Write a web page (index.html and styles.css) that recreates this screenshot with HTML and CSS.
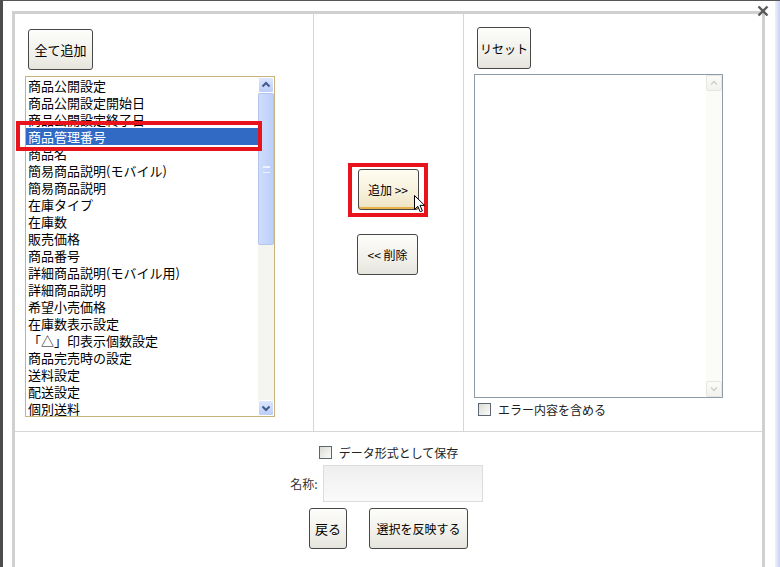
FILE: index.html
```html
<!DOCTYPE html>
<html lang="ja">
<head>
<meta charset="UTF-8">
<meta name="viewport" content="width=device-width, initial-scale=1.0">
<title>項目選択</title>
<link rel="stylesheet" href="styles.css">
</head>
<body>

<div class="window">
    <div class="panel">
        <div class="columns">
            <div class="col col-left">
                <button type="button" class="btn btn-addall">全て追加</button>
                <div class="listbox">
                    <ul class="items">
                        <li>商品公開設定</li>
                        <li>商品公開設定開始日</li>
                        <li>商品公開設定終了日</li>
                        <li class="selected">商品管理番号</li>
                        <li>商品名</li>
                        <li>簡易商品説明(モバイル)</li>
                        <li>簡易商品説明</li>
                        <li>在庫タイプ</li>
                        <li>在庫数</li>
                        <li>販売価格</li>
                        <li>商品番号</li>
                        <li>詳細商品説明(モバイル用)</li>
                        <li>詳細商品説明</li>
                        <li>希望小売価格</li>
                        <li>在庫数表示設定</li>
                        <li>「△」印表示個数設定</li>
                        <li>商品完売時の設定</li>
                        <li>送料設定</li>
                        <li>配送設定</li>
                        <li>個別送料</li>
                    </ul>
                    <div class="scrollbar">
                        <div class="sb-btn">
                            <svg width="14" height="14" viewBox="0 0 14 14"><path d="M3.5 8.5 L7 5 L10.5 8.5" fill="none" stroke="#3f5a8c" stroke-width="2"/></svg>
                        </div>
                        <div class="sb-track">
                            <div class="sb-thumb"><span class="grip"></span></div>
                        </div>
                        <div class="sb-btn">
                            <svg width="14" height="14" viewBox="0 0 14 14"><path d="M3.5 5.5 L7 9 L10.5 5.5" fill="none" stroke="#3f5a8c" stroke-width="2"/></svg>
                        </div>
                    </div>
                </div>
                <div class="mark mark-item"></div>
            </div>

            <div class="col col-mid">
                <div class="mark-btn">
                    <button type="button" class="btn btn-move btn-hover">追加 &gt;&gt;</button>
                </div>
                <button type="button" class="btn btn-move btn-remove">&lt;&lt; 削除</button>
                <svg class="cursor" width="12" height="18" viewBox="0 0 12 18">
                    <path d="M0.5 0.5 L0.5 14.5 L3.8 11.3 L6.2 16.8 L8.4 15.8 L6 10.4 L10.6 10.4 Z" fill="#fff" stroke="#000" stroke-width="1" stroke-linejoin="round"/>
                </svg>
            </div>

            <div class="col col-right">
                <button type="button" class="btn btn-reset">リセット</button>
                <div class="textbox">
                    <div class="tb-area"></div>
                    <div class="scrollbar scrollbar-off">
                        <div class="sb-btn">
                            <svg width="14" height="14" viewBox="0 0 14 14"><path d="M4 8.5 L7 5.5 L10 8.5" fill="none" stroke="#cfcfcf" stroke-width="1.5"/></svg>
                        </div>
                        <div class="sb-track"></div>
                        <div class="sb-btn">
                            <svg width="14" height="14" viewBox="0 0 14 14"><path d="M4 5.5 L7 8.5 L10 5.5" fill="none" stroke="#cfcfcf" stroke-width="1.5"/></svg>
                        </div>
                    </div>
                </div>
                <label class="check check-error"><span class="box"></span>エラー内容を含める</label>
            </div>
        </div>

        <div class="footer">
            <label class="check"><span class="box"></span>データ形式として保存</label>
            <div class="name-row">
                <span class="name-label">名称:</span>
                <span class="name-input"></span>
            </div>
            <div class="actions">
                <button type="button" class="btn btn-back">戻る</button>
                <button type="button" class="btn btn-apply">選択を反映する</button>
            </div>
        </div>
    </div>

    <div class="page-scroll"></div>

    <svg class="close" width="12" height="12" viewBox="0 0 12 12">
        <path d="M1.5 1.5 L10.5 10.5 M10.5 1.5 L1.5 10.5" stroke="#5a5a5a" stroke-width="2.4"/>
    </svg>
</div>

</body>
</html>
```

FILE: styles.css
```css
body {
    margin: 0;
    padding: 0;
    background-color: #fff;
    font-family: "Noto Sans CJK JP", "Liberation Sans", sans-serif;
    font-size: 13px;
    color: #000;
    overflow: hidden;
}
.window {
    position: relative;
    display: flex;
    height: 567px;
    box-sizing: border-box;
    border-top: 1px solid #555;
    border-left: 3px solid #4d4d4d;
    padding: 10px 0 0 9px;
}
.panel {
    width: 753px;
    box-sizing: border-box;
    border: 3px solid #d0d0d0;
    border-bottom: none;
}
.page-scroll {
    width: 5px;
    margin-left: 10px;
    margin-top: -10px;
    background: linear-gradient(90deg, #eef1fb, #c9d3f3);
}
.close {
    position: absolute;
    top: 4px;
    right: 11px;
}

/* three columns */
.columns {
    display: flex;
    height: 418px;
    box-sizing: border-box;
    border-bottom: 1px solid #d6d6d6;
}
.col {
    box-sizing: border-box;
}
.col-left {
    position: relative;
    width: 299px;
    border-right: 1px solid #d6d6d6;
    padding: 15px 0 0 10px;
}
.col-mid {
    position: relative;
    width: 150px;
    border-right: 1px solid #d6d6d6;
    padding: 149px 2px 0 0;
    display: flex;
    flex-direction: column;
    align-items: center;
}
.col-right {
    width: 298px;
    padding: 13px 0 0 10px;
}

/* buttons */
.btn {
    display: block;
    padding: 0;
    border: 1px solid #474747;
    border-radius: 3px;
    background: linear-gradient(#fdfdfb, #f1f0ea 60%, #e6e5dd);
    font-family: inherit;
    font-size: 13px;
    color: #000;
    cursor: pointer;
}
.btn-addall {
    width: 65px;
    height: 41px;
    margin-left: 3px;
}
.btn-reset {
    width: 54px;
    height: 42px;
    margin-left: 3px;
    font-size: 12px;
}
.btn-move {
    width: 61px;
    height: 41px;
    font-size: 12px;
}
.btn-hover {
    background: linear-gradient(#fffdf2, #f6f0da 60%, #eee3c2);
    box-shadow: inset 0 -2px 0 #e8b24a;
}
.btn-remove {
    margin-top: 17px;
}
.btn-back {
    width: 38px;
    height: 41px;
}
.btn-apply {
    width: 99px;
    height: 41px;
    font-size: 12px;
}

/* item list */
.listbox {
    display: flex;
    width: 250px;
    height: 341px;
    margin-top: 6px;
    box-sizing: border-box;
    border: 1px solid #c8b37b;
    overflow: hidden;
}
.items {
    flex: 1;
    list-style-type: none;
    margin: 0;
    padding: 0;
}
.items li {
    height: 17px;
    line-height: 17px;
    padding-left: 2px;
    white-space: nowrap;
    overflow: hidden;
}
.items li.selected {
    background-color: #316ac5;
    color: #fff;
}
.scrollbar {
    width: 16px;
    display: flex;
    flex-direction: column;
    background-color: #f4f4f0;
}
.sb-btn {
    height: 16px;
    box-sizing: border-box;
    display: flex;
    align-items: center;
    justify-content: center;
    border: 1px solid #fff;
    border-radius: 2px;
    background: linear-gradient(#dce6fd, #bccdf9);
}
.sb-track {
    flex: 1;
}
.sb-thumb {
    height: 152px;
    box-sizing: border-box;
    display: flex;
    align-items: center;
    justify-content: center;
    border: 1px solid #b3c4f0;
    border-radius: 2px;
    background: linear-gradient(90deg, #cfdcfd, #bccefa);
}
.grip {
    width: 7px;
    height: 5px;
    border-top: 1px solid #eef3ff;
    border-bottom: 1px solid #eef3ff;
    box-shadow: inset 0 2px 0 -1px #eef3ff;
}
.scrollbar-off {
    background-color: #fbfbf8;
}
.scrollbar-off .sb-btn {
    border: 1px solid #e6e6e2;
    background: linear-gradient(#fbfbf9, #f1f1ed);
}

/* red annotation marks */
.mark {
    position: absolute;
    box-sizing: border-box;
    border: 4px solid #e8131b;
}
.mark-item {
    left: 1px;
    top: 107px;
    width: 246px;
    height: 30px;
}
.mark-btn {
    border: 4px solid #e8131b;
    padding: 2px 5px 3px 6px;
}
.cursor {
    position: absolute;
    left: 100px;
    top: 181px;
}

/* right side text area */
.textbox {
    display: flex;
    width: 249px;
    height: 324px;
    margin-top: 5px;
    box-sizing: border-box;
    border: 1px solid #8f9ba6;
}
.tb-area {
    flex: 1;
    background-color: #fff;
}

/* checkboxes */
.check {
    display: flex;
    align-items: center;
    gap: 7px;
    height: 18px;
    font-size: 12px;
    color: #222;
}
.check-error {
    margin: 2px 0 0 4px;
}
.box {
    width: 13px;
    height: 13px;
    box-sizing: border-box;
    border: 1px solid #5c6670;
    background: linear-gradient(135deg, #dcdcd6, #fbfbfa);
}

/* bottom area */
.footer {
    display: flex;
    flex-direction: column;
    align-items: center;
    padding-top: 11px;
}
.name-row {
    display: flex;
    align-items: center;
    gap: 5px;
    margin-top: 4px;
    margin-right: 4px;
}
.name-label {
    font-size: 12px;
    color: #333;
}
.name-input {
    width: 160px;
    height: 37px;
    box-sizing: border-box;
    border: 1px solid #dcdcdc;
    background: linear-gradient(#efefef, #fafafa);
}
.actions {
    display: flex;
    gap: 22px;
    margin-top: 6px;
}
```
